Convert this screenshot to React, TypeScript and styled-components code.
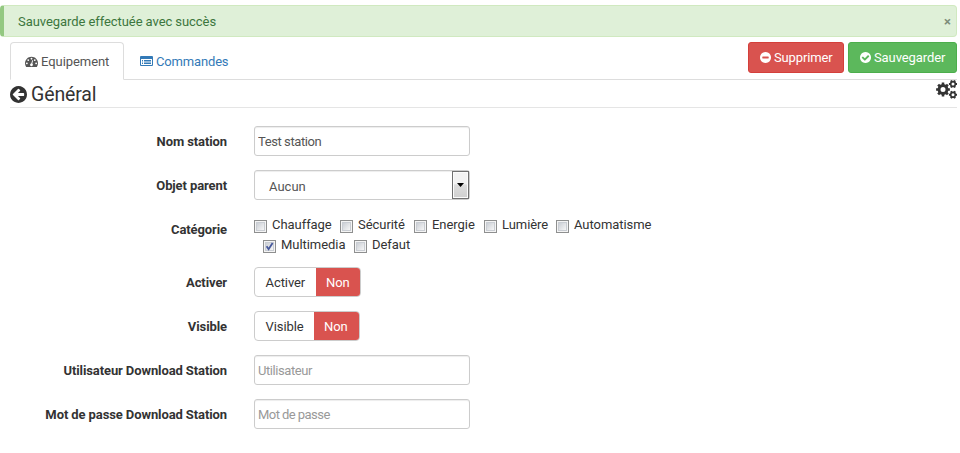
import React from "react";
import styled, { createGlobalStyle } from "styled-components";

const GlobalStyle = createGlobalStyle`
  * { box-sizing: border-box; }
  body {
    margin: 0;
    background: #fff;
    color: #333;
    font: 13px/20px Roboto, "Liberation Sans", sans-serif;
    overflow: hidden;
  }
`;

const Page = styled.div`
  height: 453px;
  padding-top: 5px;
`;

const Alert = styled.div`
  display: flex;
  align-items: center;
  justify-content: space-between;
  width: 957px;
  height: 32px;
  padding: 0 5px 0 14px;
  border: 1px solid #d0e9c0;
  border-left: 4px solid #93c881;
  border-radius: 4px;
  background: #dff0d8;
  color: #3c763d;
`;

const Text = styled.span<{ $track?: number; $drop?: number }>`
  margin-top: ${(p) => p.$drop ?? 0}px;
  letter-spacing: ${(p) => p.$track ?? 0}px;
  white-space: nowrap;
`;

const Close = styled.button`
  border: 0;
  padding: 2px 0 0;
  background: none;
  color: #7d8c79;
  font: bold 13px/20px Roboto, sans-serif;
`;

const TabBar = styled.div`
  display: flex;
  align-items: flex-start;
  width: 947px;
  height: 38px;
  margin: 5px 0 0 10px;
  border-bottom: 1px solid #ddd;
`;

const Tab = styled.div<{ $active?: boolean }>`
  display: flex;
  align-items: center;
  gap: 3.5px;
  height: 38px;
  width: ${(p) => (p.$active ? 114 : 118)}px;
  padding-left: ${(p) => (p.$active ? 13.5 : 14.5)}px;
  border: 1px solid ${(p) => (p.$active ? "#ddd" : "transparent")};
  border-bottom-color: ${(p) => (p.$active ? "#fff" : "transparent")};
  border-radius: 4px 4px 0 0;
  color: ${(p) => (p.$active ? "#555" : "#337ab7")};
`;

const Actions = styled.div`
  display: flex;
  gap: 4px;
  margin-left: auto;
`;

const Button = styled.button<{ $kind: "danger" | "success" }>`
  display: flex;
  align-items: center;
  gap: 3px;
  width: ${(p) => (p.$kind === "danger" ? 96 : 109)}px;
  height: 31px;
  padding: 0 0 0 11px;
  border: 1px solid ${(p) => (p.$kind === "danger" ? "#d43f3a" : "#4cae4c")};
  border-radius: 3px;
  background: ${(p) => (p.$kind === "danger" ? "#d9534f" : "#5cb85c")};
  color: #fff;
  font: 13px/20px Roboto, sans-serif;
`;

const Legend = styled.div`
  display: flex;
  justify-content: space-between;
  width: 947px;
  height: 28px;
  margin-left: 10px;
  border-bottom: 1px solid #e5e5e5;
`;

const Title = styled.h1`
  display: flex;
  align-items: center;
  gap: 4px;
  height: 29px;
  margin: 0;
  color: #333;
  font-size: 19.5px;
  font-weight: 400;
`;

const Form = styled.div`
  display: flex;
  flex-direction: column;
  gap: 14px;
  margin-top: 18px;
`;

const Row = styled.div<{ $tall?: boolean }>`
  display: grid;
  grid-template-columns: 227px 430px;
  column-gap: 27px;
  height: ${(p) => (p.$tall ? 39 : 30)}px;
`;

const Label = styled.label`
  height: 31px;
  font-weight: 700;
  letter-spacing: -0.1px;
  line-height: 31px;
  text-align: right;
`;

const Input = styled.input<{ $track?: number }>`
  width: 216px;
  height: 30px;
  padding: 0 3px 0;
  border: 1px solid #ccc;
  border-radius: 3px;
  outline: 0;
  background: #fff;
  box-shadow: inset 0 1px 1px rgba(0, 0, 0, 0.075);
  color: #555;
  font: 13px/20px Roboto, sans-serif;
  letter-spacing: ${(p) => p.$track ?? -0.42}px;
  &::placeholder { color: #999; opacity: 1; }
`;

const Select = styled.div`
  display: flex;
  align-items: center;
  justify-content: space-between;
  width: 216px;
  height: 30px;
  padding: 0 0 0 14px;
  border: 1px solid #ccc;
  border-radius: 3px;
  box-shadow: inset 0 1px 1px rgba(0, 0, 0, 0.075);
  color: #555;
`;

const Arrow = styled.span`
  display: flex;
  align-items: center;
  justify-content: center;
  width: 17px;
  height: 28px;
  border: 1px solid #707070;
  box-shadow: inset 0 0 0 1px #fbfbfb;
  background: linear-gradient(#f2f2f2 0 45%, #dddddd 50%, #cfcfcf);
`;

const Checks = styled.div`
  display: flex;
  flex-direction: column;
  padding-top: 1px;
`;

const CheckLine = styled.div<{ $indent?: boolean }>`
  display: flex;
  height: 20px;
  padding-left: ${(p) => (p.$indent ? 9 : 0)}px;
`;

const Check = styled.label<{ $width: number }>`
  display: flex;
  gap: 5px;
  width: ${(p) => p.$width}px;
  line-height: 20px;
`;

const Box = styled.span`
  flex: none;
  display: flex;
  width: 13px;
  height: 13px;
  margin-top: 5px;
  border: 1px solid #8e8f8f;
  background: linear-gradient(135deg, #cbcfd5, #f6f6f6) center / 7px 7px no-repeat #f4f4f4;
  box-shadow: inset 0 0 0 1px #f4f4f4, inset 0 0 0 2px #c9cdd3;
`;

const Toggle = styled.div<{ $width: number }>`
  display: flex;
  width: ${(p) => p.$width}px;
  height: 30px;
  border: 1px solid #ccc;
  border-radius: 4px;
  overflow: hidden;
  letter-spacing: -0.08px;
  line-height: 29px;
`;

const ToggleLabel = styled.span`
  flex: 1;
  padding-left: 10.5px;
`;

const ToggleOff = styled.span<{ $width: number }>`
  width: ${(p) => p.$width}px;
  padding-left: 10px;
  background: #d9534f;
  color: #fff;
`;

const disc =
  "M1664 896q0 209-103 385.5t-279.5 279.5-385.5 103-385.5-103-279.5-279.5-103-385.5 103-385.5 279.5-279.5 385.5-103 385.5 103 279.5 279.5 103 385.5z";

const shapes = {
  minus:
    "M1344 960v-128q0-26-19-45t-45-19h-768q-26 0-45 19t-19 45v128q0 26 19 45t45 19h768q26 0 45-19t19-45z",
  check:
    "M1412 734q0-28-18-46l-91-90q-19-19-45-19t-45 19l-408 407-226-226q-19-19-45-19t-45 19l-91 90q-18 18-18 46 0 27 18 45l362 362q19 19 45 19 27 0 46-19l543-543q18-18 18-45z",
  left:
    "M1408 960v-128q0-26-19-45t-45-19h-502l189-189q19-19 19-45t-19-45l-91-91q-18-18-45-18t-45 18l-362 362-91 91q-18 18-18 45t18 45l91 91 362 362q18 18 45 18t45-18l91-91q18-18 18-45t-18-45l-189-189h502q26 0 45-19t19-45z",
};

const DiscIcon = ({ shape, size }: { shape: keyof typeof shapes; size: number }) => (
  <svg width={size} height={size} viewBox="128 128 1536 1536">
    <path fill="currentColor" fillRule="evenodd" d={disc + shapes[shape]} />
  </svg>
);

const Dashboard = () => (
  <svg width="13" height="13" viewBox="0 0 1792 1792">
    <path
      fill="currentColor"
      fillRule="evenodd"
      d="M384 1152q0-53-37.500-90.500t-90.500-37.500-90.500 37.500-37.500 90.500 37.500 90.500 90.500 37.500 90.500-37.500 37.500-90.500zm192-448q0-53-37.500-90.500t-90.500-37.500-90.500 37.500-37.500 90.500 37.500 90.500 90.500 37.500 90.500-37.500 37.500-90.500zm428 481l101-382q6-26-7.500-48.500t-38.500-29.500-48 6.500-30 39.500l-101 382q-60 5-107 43.500t-63 98.500q-20 77 20 146t117 89 146-20 89-117q16-60-6-117t-72-91zm660-33q0-53-37.500-90.500t-90.500-37.500-90.500 37.500-37.500 90.500 37.500 90.500 90.500 37.500 90.500-37.500 37.500-90.500zm-640-640q0-53-37.500-90.500t-90.500-37.500-90.500 37.500-37.500 90.500 37.500 90.500 90.500 37.500 90.500-37.500 37.500-90.500zm448 192q0-53-37.500-90.500t-90.500-37.500-90.500 37.500-37.500 90.500 37.500 90.500 90.500 37.500 90.500-37.500 37.500-90.500zm320 448q0 261-141 483-19 29-54 29h-1402q-35 0-54-29-141-221-141-483 0-182 71-348t191-286 286-191 348-71 348 71 286 191 191 286 71 348z"
    />
  </svg>
);

const ListIcon = () => (
  <svg width="13" height="11" viewBox="0 0 13 11" fill="currentColor">
    <path
      fillRule="evenodd"
      d="M1 0h11q1 0 1 1v8q0 1-1 1H1q-1 0-1-1V1q0-1 1-1zM1 3v5.500q0 .5.5.5h10q.5 0 .5-.5V3z"
    />
    <path d="M2 4h1v1H2zM4 4h7v1H4zM2 5.500h1v1H2zM4 5.500h7v1H4zM2 7h1v1H2zM4 7h7v1H4z" />
  </svg>
);

const gear = (cx: number, cy: number, r: number, hole: number, teeth: number) => {
  const points: string[] = [];
  for (let i = 0; i < teeth; i++) {
    const a = (i / teeth) * Math.PI * 2;
    const s = Math.PI / teeth;
    [[-0.62, 0.78], [-0.46, 1], [0.46, 1], [0.62, 0.78]].forEach(([o, k]) => {
      points.push(`${(cx + Math.cos(a + o * s) * r * k).toFixed(2)} ${(cy + Math.sin(a + o * s) * r * k).toFixed(2)}`);
    });
  }
  return `M${points.join("L")}ZM${cx - hole} ${cy}a${hole} ${hole} 0 1 0 ${hole * 2} 0a${hole} ${hole} 0 1 0 ${-hole * 2} 0Z`;
};

const Gears = () => (
  <svg width="21" height="20" viewBox="0 0 21 20" fill="#333" fillRule="evenodd">
    <path d={gear(7, 9.5, 7, 2.5, 8)} />
    <path d={gear(17, 4, 4.2, 1.5, 6)} />
    <path d={gear(17, 14.8, 4.2, 1.5, 6)} />
  </svg>
);

const Tick = () => (
  <svg width="11" height="11" viewBox="0 0 11 11">
    <path d="M2.6 5.2 4.6 8.2 8.6 2" fill="none" stroke="#46589c" strokeWidth="1.8" />
  </svg>
);

type Item = { name: string; width: number; checked?: boolean };

const lines: Item[][] = [
  [
    { name: "Chauffage", width: 86 },
    { name: "Sécurité", width: 74 },
    { name: "Energie", width: 70 },
    { name: "Lumière", width: 72 },
    { name: "Automatisme", width: 100 },
  ],
  [
    { name: "Multimedia", width: 91, checked: true },
    { name: "Defaut", width: 70 },
  ],
];

export default function App() {
  return (
    <Page>
      <GlobalStyle />
      <Alert>
        <Text $track={-0.07} $drop={1}>Sauvegarde effectuée avec succès</Text>
        <Close>×</Close>
      </Alert>
      <TabBar>
        <Tab $active>
          <Dashboard />
          <Text $track={-0.06} $drop={1}>Equipement</Text>
        </Tab>
        <Tab>
          <ListIcon />
          <Text $track={-0.16} $drop={1}>Commandes</Text>
        </Tab>
        <Actions>
          <Button $kind="danger">
            <DiscIcon shape="minus" size={11} />
            <Text $track={-0.15}>Supprimer</Text>
          </Button>
          <Button $kind="success">
            <DiscIcon shape="check" size={11} />
            <Text $track={-0.1}>Sauvegarder</Text>
          </Button>
        </Actions>
      </TabBar>
      <Legend>
        <Title>
          <DiscIcon shape="left" size={17} />
          <Text $track={-0.12} $drop={1}>Général</Text>
        </Title>
        <Gears />
      </Legend>
      <Form>
        <Row>
          <Label>Nom station</Label>
          <Input defaultValue="Test station" />
        </Row>
        <Row>
          <Label>Objet parent</Label>
          <Select>
            <Text $drop={3}>Aucun</Text>
            <Arrow>
              <svg width="7" height="4" viewBox="0 0 7 4">
                <path d="M0 0h7L3.5 4z" />
              </svg>
            </Arrow>
          </Select>
        </Row>
        <Row $tall>
          <Label>Catégorie</Label>
          <Checks>
            {lines.map((line, i) => (
              <CheckLine key={i} $indent={i === 1}>
                {line.map((item) => (
                  <Check key={item.name} $width={item.width}>
                    <Box>{item.checked && <Tick />}</Box>
                    <Text $track={-0.05}>{item.name}</Text>
                  </Check>
                ))}
              </CheckLine>
            ))}
          </Checks>
        </Row>
        <Row>
          <Label>Activer</Label>
          <Toggle $width={107}>
            <ToggleLabel>Activer</ToggleLabel>
            <ToggleOff $width={44}>Non</ToggleOff>
          </Toggle>
        </Row>
        <Row>
          <Label>Visible</Label>
          <Toggle $width={106}>
            <ToggleLabel>Visible</ToggleLabel>
            <ToggleOff $width={45}>Non</ToggleOff>
          </Toggle>
        </Row>
        <Row>
          <Label>Utilisateur Download Station</Label>
          <Input placeholder="Utilisateur" />
        </Row>
        <Row>
          <Label>Mot de passe Download Station</Label>
          <Input placeholder="Mot de passe" $track={-0.55} />
        </Row>
      </Form>
    </Page>
  );
}
